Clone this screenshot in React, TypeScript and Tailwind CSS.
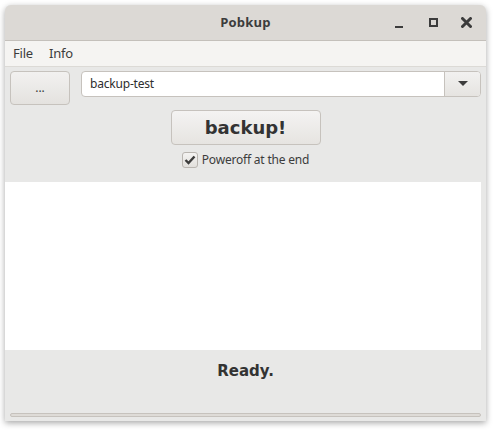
export default function App() {
  return (
    <div className="w-[494px] h-[431px] bg-white overflow-hidden">
      <div
        className="ml-[5px] mt-[5px] w-[481px] h-[416px] bg-[#e8e8e7] rounded-t-[6px] flex flex-col shadow-[0_2px_6px_rgba(0,0,0,0.35)] overflow-hidden"
        style={{ fontFamily: '"Noto Sans", "DejaVu Sans", sans-serif' }}
      >
        {/* title bar */}
        <div className="relative h-[36px] shrink-0 bg-[#dcd9d5] border-b border-[#c4c0bb] flex items-center justify-center">
          <span className="text-[13px] font-bold text-[#3c3c3c] tracking-[0.2px]" style={{ fontFamily: '"Open Sans", sans-serif' }}>
            Pobkup
          </span>
          <div className="absolute right-0 top-0 h-full flex items-center">
            <div className="w-[35px] h-full flex items-center justify-center">
              <div className="w-[8px] h-[2px] bg-[#3c3c3c] mt-[9px]" />
            </div>
            <div className="w-[35px] h-full flex items-center justify-center">
              <div className="w-[9px] h-[9px] border-[2px] border-[#3c3c3c]" />
            </div>
            <div className="w-[35px] h-full flex items-center justify-center pr-[5px]">
              <svg width="11" height="11" viewBox="0 0 11 11">
                <path d="M1.5 1.5 L9.5 9.5 M9.5 1.5 L1.5 9.5" stroke="#3c3c3c" strokeWidth="3" strokeLinecap="round" />
              </svg>
            </div>
          </div>
        </div>

        {/* menu bar */}
        <div className="h-[26px] shrink-0 bg-[#f5f4f2] border-b border-[#dcdad6] flex items-center gap-[16px] px-[8px] text-[13px] text-[#3c3c3c] tracking-[-0.2px]">
          <span>File</span>
          <span>Info</span>
        </div>

        {/* controls */}
        <div className="flex items-start gap-[11px] px-[5px] pt-[4px]">
          <button className="w-[60px] h-[34px] rounded-[4px] border border-[#c6c2bd] bg-gradient-to-b from-[#f2f1f0] to-[#e4e2df] text-[12px] text-[#3c3c3c] flex items-center justify-center">
            ...
          </button>
          <div className="flex-1 h-[26px] rounded-[4px] border border-[#c6c2bd] bg-white flex overflow-hidden">
            <div className="flex-1 flex items-center px-[8px] text-[12px] tracking-[-0.2px] text-[#2e2e2e]">backup-test</div>
            <div className="w-[36px] border-l border-[#c6c2bd] bg-gradient-to-b from-[#f2f1f0] to-[#e6e4e1] flex items-center justify-center">
              <svg width="10" height="6" viewBox="0 0 10 6">
                <path d="M0 0 L10 0 L5 5 Z" fill="#3c3c3c" />
              </svg>
            </div>
          </div>
        </div>

        <div className="flex justify-center mt-[5px]">
          <button
            className="w-[150px] h-[35px] rounded-[4px] border border-[#c6c2bd] bg-gradient-to-b from-[#f4f3f2] to-[#e6e4e1] text-[18px] font-bold text-[#333333]"
            style={{ fontFamily: '"DejaVu Sans", sans-serif' }}
          >
            backup!
          </button>
        </div>

        <div className="flex justify-center items-center gap-[4px] mt-[6px] h-[18px]">
          <div className="w-[16px] h-[16px] rounded-[3px] border border-[#b9b5b0] bg-gradient-to-b from-[#f4f3f2] to-[#e2e0dd] flex items-center justify-center">
            <svg width="12" height="10" viewBox="0 0 12 10">
              <path d="M1.5 5 L4.5 8 L10.5 1.5" stroke="#3c3c3c" strokeWidth="2.4" fill="none" />
            </svg>
          </div>
          <span className="text-[12px] tracking-[-0.2px] text-[#3c3c3c]">Poweroff at the end</span>
        </div>

        {/* output area */}
        <div className="mt-[13px] mr-[5px] h-[168px] bg-white" />

        <div
          className="mt-[10px] text-center text-[15px] font-bold text-[#333333]"
          style={{ fontFamily: '"DejaVu Sans", sans-serif' }}
        >
          Ready.
        </div>

        {/* progress bar */}
        <div className="mt-auto mb-[4px] mx-[5px] h-[4px] rounded-[2px] border border-[#c6c2bd] bg-[#dedbd7]" />
      </div>
    </div>
  );
}
